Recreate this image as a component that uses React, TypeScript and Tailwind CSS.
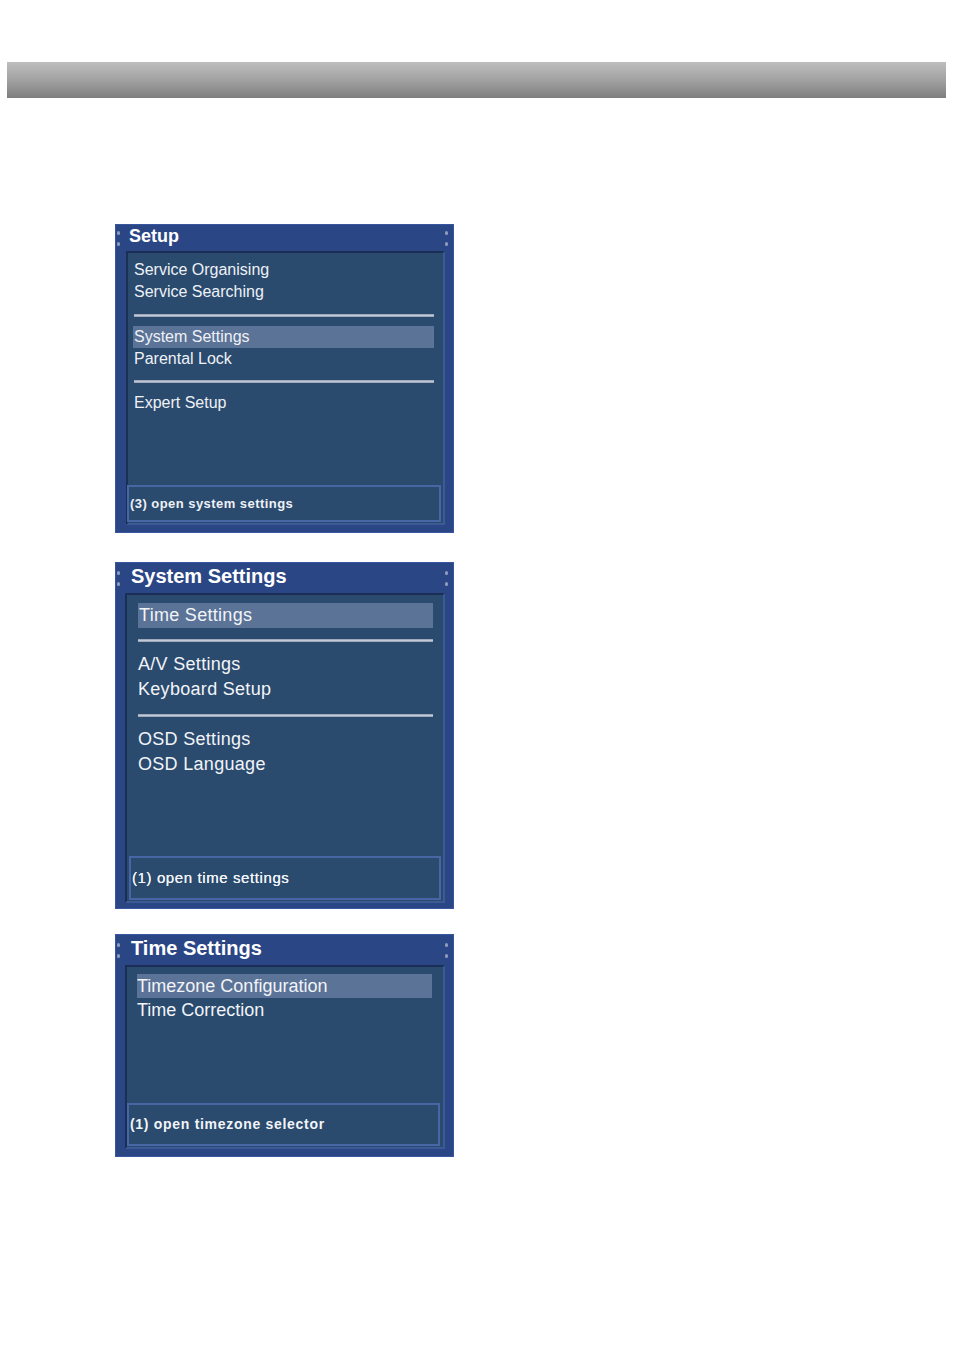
import React from "react";

const font = { fontFamily: '"Liberation Sans", Arial, sans-serif' };

function Dots() {
  return (
    <div className="flex flex-col gap-[7px]">
      <span className="block w-[3px] h-[4px] rounded-full bg-[#8d9cbc]" />
      <span className="block w-[3px] h-[4px] rounded-full bg-[#8d9cbc]" />
    </div>
  );
}

function Sep({ cls }: { cls: string }) {
  return <div className={"h-[3px] bg-[#c2c9d6] border-y border-[#9fa9bd] " + cls} />;
}

export default function App() {
  return (
    <div className="w-[954px] h-[1350px] bg-white pt-[62px]" style={font}>
      <div className="ml-[7px] mr-[8px] h-[36px] bg-gradient-to-b from-[#bebebe] via-[#a2a2a2] to-[#7e7e7e]" />

      <div className="pl-[115px] pt-[126px] flex flex-col">
        {/* Panel 1 */}
        <div className="w-[339px] h-[309px] bg-[#2b4685] border border-[#3856a0] flex flex-col">
          <div className="h-[26px] flex items-center shrink-0">
            <div className="ml-[1px]">
              <Dots />
            </div>
            <span className="ml-[9px] -mt-[5px] text-[18px] font-bold text-white leading-none">Setup</span>
            <div className="ml-auto mr-[5px]">
              <Dots />
            </div>
          </div>
          <div className="flex-1 ml-[10px] mr-[8px] mb-[7px] bg-[#2a4a6e] border-2 border-l-[#1b2e55] border-t-[#1b2e55] border-r-[#3b5a96] border-b-[#3b5a96] flex flex-col pl-[6px] pr-[9px] pt-[6px] text-[#eef1f6]">
            <div className="text-[16px] leading-[22px]">Service Organising</div>
            <div className="text-[16px] leading-[22px]">Service Searching</div>
            <Sep cls="mt-[11px] mb-[9px]" />
            <div className="text-[16px] leading-[22px] bg-[#5b7397] -ml-[1px] pl-[1px]">System Settings</div>
            <div className="text-[16px] leading-[22px]">Parental Lock</div>
            <Sep cls="mt-[10px] mb-[9px]" />
            <div className="text-[16px] leading-[22px]">Expert Setup</div>
            <div className="mt-auto mb-[1px] -ml-[7px] -mr-[7px] h-[37px] border-2 border-[#4766a6] flex items-center pl-[1px] text-[13px] font-bold tracking-[0.45px] text-[#eef1f6]">
              (3) open system settings
            </div>
          </div>
        </div>

        {/* Panel 2 */}
        <div className="mt-[29px] w-[339px] h-[347px] bg-[#2b4685] border border-[#3856a0] flex flex-col">
          <div className="h-[30px] flex items-center shrink-0">
            <div className="ml-[1px]">
              <Dots />
            </div>
            <span className="ml-[11px] -mt-[5px] text-[20px] font-bold text-white leading-none">System Settings</span>
            <div className="ml-auto mr-[5px]">
              <Dots />
            </div>
          </div>
          <div className="flex-1 ml-[9px] mr-[8px] mb-[5px] bg-[#2a4a6e] border-2 border-l-[#1b2e55] border-t-[#1b2e55] border-r-[#3b5a96] border-b-[#3b5a96] flex flex-col pl-[11px] pr-[10px] pt-[8px] text-[#f2f4f8] tracking-[0.3px]">
            <div className="text-[18px] leading-[25px] bg-[#5b7397] pl-[1px]">Time Settings</div>
            <Sep cls="mt-[11px] mb-[10px]" />
            <div className="text-[18px] leading-[25px]">A/V Settings</div>
            <div className="text-[18px] leading-[25px]">Keyboard Setup</div>
            <Sep cls="mt-[12px] mb-[10px]" />
            <div className="text-[18px] leading-[25px]">OSD Settings</div>
            <div className="text-[18px] leading-[25px]">OSD Language</div>
            <div className="mt-auto mb-[1px] -ml-[9px] -mr-[8px] h-[44px] border-2 border-[#4766a6] flex items-center pl-[1px] text-[15px] tracking-[0.6px] text-[#f2f4f8] [text-shadow:0_0_0.4px_#ffffff]">
              (1) open time settings
            </div>
          </div>
        </div>

        {/* Panel 3 */}
        <div className="mt-[25px] w-[339px] h-[223px] bg-[#2b4685] border border-[#3856a0] flex flex-col">
          <div className="h-[30px] flex items-center shrink-0">
            <div className="ml-[1px]">
              <Dots />
            </div>
            <span className="ml-[11px] -mt-[5px] text-[20px] font-bold text-white leading-none">Time Settings</span>
            <div className="ml-auto mr-[5px]">
              <Dots />
            </div>
          </div>
          <div className="flex-1 ml-[9px] mr-[8px] mb-[7px] bg-[#2a4a6e] border-2 border-l-[#1b2e55] border-t-[#1b2e55] border-r-[#3b5a96] border-b-[#3b5a96] flex flex-col pl-[10px] pr-[11px] pt-[7px] text-[#f2f4f8]">
            <div className="text-[18px] leading-[24px] bg-[#5b7397]">Timezone Configuration</div>
            <div className="text-[18px] leading-[25px]">Time Correction</div>
            <div className="mt-auto mb-[1px] -ml-[10px] -mr-[8px] h-[43px] border-2 border-[#4766a6] flex items-center pl-[1px] text-[14px] font-bold tracking-[0.7px] text-[#f2f4f8]">
              (1) open timezone selector
            </div>
          </div>
        </div>
      </div>
    </div>
  );
}
